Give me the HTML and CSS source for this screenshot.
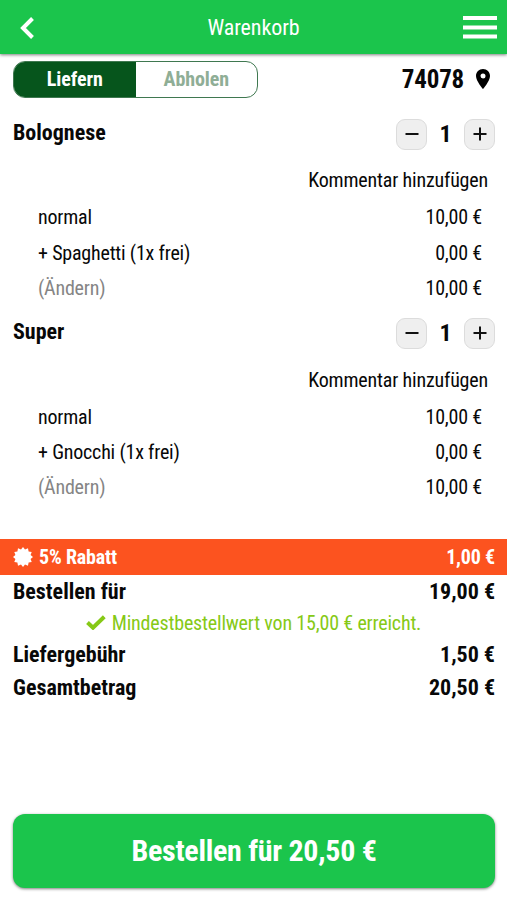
FILE: index.html
```html
<!DOCTYPE html>
<html lang="de">
<head>
  <meta charset="UTF-8">
  <meta name="viewport" content="width=device-width, initial-scale=1.0">
  <title>Warenkorb</title>
  <link rel="stylesheet" href="styles.css">
</head>
<body>
  <header class="topbar">
    <svg class="back" viewBox="0 0 14 22"><path d="M12.5 1.5L3 11L12.5 20.5" /></svg>
    <h1><span class="txt">Warenkorb</span></h1>
    <svg class="menu" viewBox="0 0 34 24"><path d="M0 2h34M0 11.5h34M0 20.5h34" /></svg>
  </header>

  <main>
    <div class="delivery">
      <div class="toggle">
        <div class="toggle-option active"><span class="txt">Liefern</span></div>
        <div class="toggle-option"><span class="txt">Abholen</span></div>
      </div>
      <div class="location">
        <span class="txt">74078</span>
        <svg class="pin" viewBox="0 0 14 20"><path fill-rule="evenodd" d="M7 0C3 0 0 3 0 7c0 5 7 13 7 13s7-8 7-13c0-4-3-7-7-7zm0 4.5a2.5 2.5 0 1 1 0 5a2.5 2.5 0 0 1 0-5z" /></svg>
      </div>
    </div>

    <section class="item">
      <div class="item-head">
        <h2><span class="txt">Bolognese</span></h2>
        <div class="stepper">
          <button class="step" aria-label="Weniger"><svg viewBox="0 0 14 14"><path d="M.5 7h13" /></svg></button>
          <span class="count">1</span>
          <button class="step" aria-label="Mehr"><svg viewBox="0 0 14 14"><path d="M.5 7h13M7 .5v13" /></svg></button>
        </div>
      </div>
      <div class="comment"><span class="txt">Kommentar hinzufügen</span></div>
      <div class="option"><span class="txt">normal</span><span class="txt">10,00 €</span></div>
      <div class="option"><span class="txt">+ Spaghetti (1x frei)</span><span class="txt">0,00 €</span></div>
      <div class="option"><span class="txt change">(Ändern)</span><span class="txt">10,00 €</span></div>
    </section>

    <section class="item">
      <div class="item-head">
        <h2><span class="txt">Super</span></h2>
        <div class="stepper">
          <button class="step" aria-label="Weniger"><svg viewBox="0 0 14 14"><path d="M.5 7h13" /></svg></button>
          <span class="count">1</span>
          <button class="step" aria-label="Mehr"><svg viewBox="0 0 14 14"><path d="M.5 7h13M7 .5v13" /></svg></button>
        </div>
      </div>
      <div class="comment"><span class="txt">Kommentar hinzufügen</span></div>
      <div class="option"><span class="txt">normal</span><span class="txt">10,00 €</span></div>
      <div class="option"><span class="txt">+ Gnocchi (1x frei)</span><span class="txt">0,00 €</span></div>
      <div class="option"><span class="txt change">(Ändern)</span><span class="txt">10,00 €</span></div>
    </section>

    <div class="discount">
      <svg class="badge" viewBox="-10 -10 20 20"><path d="M0-10L2-7.6L5-8.7L5.6-5.6L8.7-5L7.6-2L10 0L7.6 2L8.7 5L5.6 5.6L5 8.7L2 7.6L0 10L-2 7.6L-5 8.7L-5.6 5.6L-8.7 5L-7.6 2L-10 0L-7.6-2L-8.7-5L-5.6-5.6L-5-8.7L-2-7.6z" /></svg>
      <span class="txt">5% Rabatt</span>
      <span class="txt amount">1,00 €</span>
    </div>

    <div class="sum"><span class="txt">Bestellen für</span><span class="txt">19,00 €</span></div>
    <div class="minimum">
      <svg class="check" viewBox="0 0 20 15"><path d="M1.5 7.5L7 12.7L18.3 1.7" /></svg>
      <span class="txt">Mindestbestellwert von 15,00 € erreicht.</span>
    </div>
    <div class="sum"><span class="txt">Liefergebühr</span><span class="txt">1,50 €</span></div>
    <div class="sum"><span class="txt">Gesamtbetrag</span><span class="txt">20,50 €</span></div>
  </main>

  <footer>
    <button class="order"><span class="txt">Bestellen für 20,50 €</span></button>
  </footer>
</body>
</html>
```
FILE: styles.css
```css
* {
  box-sizing: border-box;
}
body {
  margin: 0;
  height: 900px;
  display: flex;
  flex-direction: column;
  overflow: hidden;
  background-color: #fff;
  color: #080808;
  font-family: "Roboto Condensed", Roboto, sans-serif;
  font-stretch: 75%;
  font-size: 20px;
  line-height: 1;
}
h1, h2 {
  margin: 0;
}
button {
  font-family: inherit;
  font-stretch: inherit;
  padding: 0;
  border: none;
}
.txt {
  white-space: nowrap;
}
.topbar {
  display: flex;
  align-items: center;
  height: 54px;
  padding: 2px 10px 0 20px;
  background-color: #1bc54c;
  color: #fff;
  box-shadow: 0 1px 3px rgba(0,0,0,0.5);
}
.topbar h1 {
  flex: 1;
  padding-left: 10px;
  text-align: center;
  font-size: 22px;
  font-weight: 450;
  letter-spacing: -0.1px;
}
.back, .menu {
  fill: none;
  stroke: #fff;
  stroke-width: 4;
}
.back {
  width: 14px;
  height: 22px;
}
.menu {
  width: 34px;
  height: 24px;
}
main {
  flex: 1;
}
.delivery {
  display: flex;
  align-items: center;
  justify-content: space-between;
  height: 53px;
  padding: 0 17px 3px 13px;
}
.toggle {
  display: flex;
  width: 245px;
  height: 37px;
  border: 1px solid #3f7850;
  border-radius: 12px;
  overflow: hidden;
}
.toggle-option {
  flex: 1;
  display: flex;
  align-items: center;
  justify-content: center;
  font-weight: 700;
  letter-spacing: -0.1px;
  color: #8fae96;
}
.toggle-option.active {
  background-color: #06551c;
  color: #fff;
}
.location {
  display: flex;
  align-items: center;
  gap: 12px;
  font-size: 25px;
  font-weight: 700;
  letter-spacing: -0.2px;
}
.pin {
  width: 14px;
  height: 20px;
}
.item {
  height: 199.3px;
}
.item-head {
  display: flex;
  align-items: center;
  justify-content: space-between;
  height: 54px;
  padding: 0 12px 0 13px;
}
.item-head h2 {
  font-size: 22px;
  padding-bottom: 3px;
}
.stepper {
  display: flex;
  align-items: center;
}
.step {
  display: flex;
  align-items: center;
  justify-content: center;
  width: 31px;
  height: 31px;
  border: 1px solid #dcdcdc;
  border-radius: 9px;
  background-color: #efefef;
}
.step svg {
  width: 14px;
  height: 14px;
  fill: none;
  stroke: #111;
  stroke-width: 2;
}
.count {
  width: 37px;
  text-align: center;
  font-size: 24px;
  font-weight: 700;
}
.comment {
  display: flex;
  align-items: center;
  justify-content: flex-end;
  height: 38.7px;
  padding-right: 19px;
  letter-spacing: -0.18px;
}
.option {
  display: flex;
  align-items: center;
  justify-content: space-between;
  height: 35.3px;
  padding: 0 25px 0 38px;
  letter-spacing: -0.2px;
}
.change {
  color: #858585;
}
.discount {
  display: flex;
  align-items: center;
  height: 36px;
  margin-top: 33px;
  padding: 0 12px 0 13px;
  background-color: #fc531f;
  color: #fff;
  font-weight: 700;
  letter-spacing: -0.18px;
}
.badge {
  width: 20px;
  height: 20px;
  margin-right: 6px;
  fill: #fff;
}
.amount {
  margin-left: auto;
}
.sum {
  display: flex;
  align-items: center;
  justify-content: space-between;
  height: 33px;
  padding: 1px 12px 0 13px;
  font-size: 22px;
  font-weight: 700;
}
.minimum {
  display: flex;
  align-items: center;
  justify-content: center;
  gap: 6px;
  height: 30px;
  color: #86c916;
  letter-spacing: -0.18px;
}
.check {
  width: 20px;
  height: 15px;
  fill: none;
  stroke: #86c916;
  stroke-width: 4;
}
footer {
  padding: 0 12px 12px 13px;
}
.order {
  display: flex;
  align-items: center;
  justify-content: center;
  width: 100%;
  height: 74px;
  padding-bottom: 2px;
  border-radius: 12px;
  background-color: #1bc54c;
  color: #fff;
  font-size: 30px;
  font-weight: 700;
  letter-spacing: -0.28px;
  box-shadow: 0 1px 3px rgba(0,0,0,0.5);
}
```
